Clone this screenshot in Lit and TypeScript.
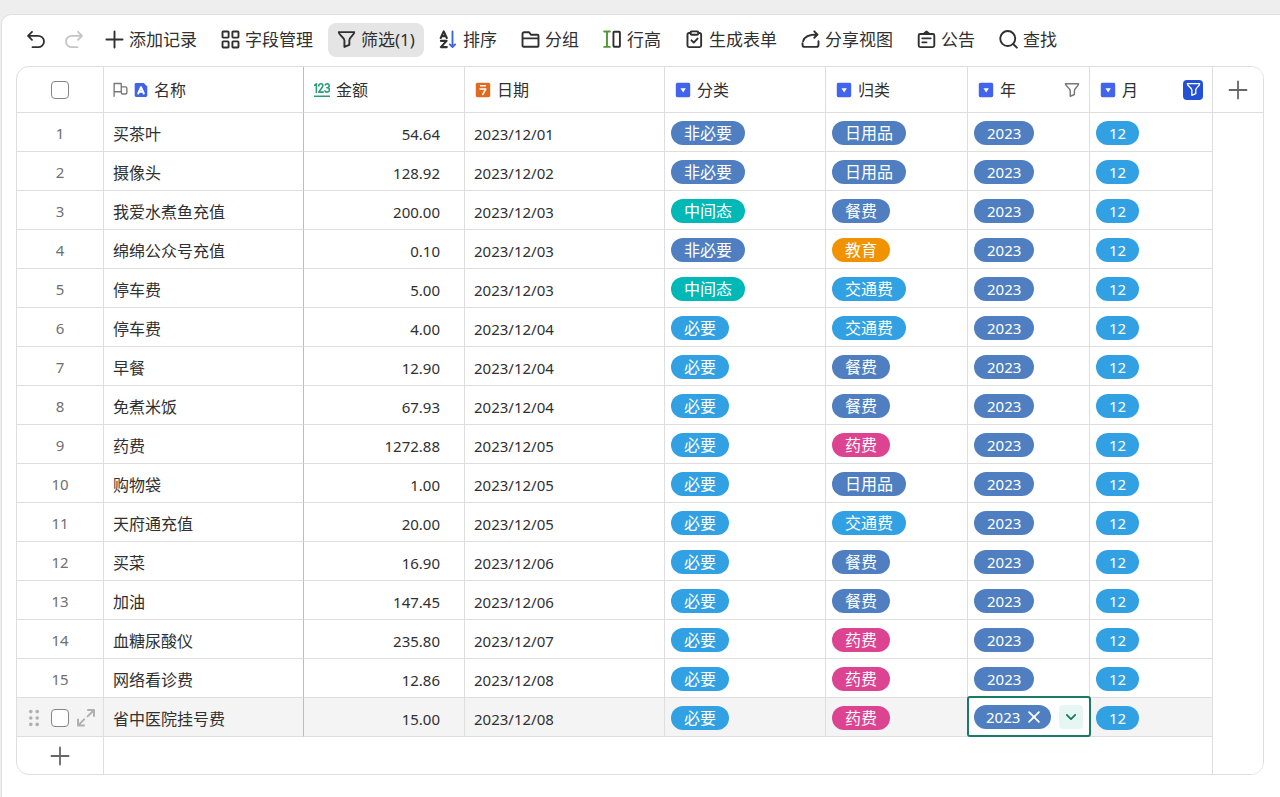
import { LitElement, html, css, svg, nothing } from "lit";
import type { TemplateResult, SVGTemplateResult } from "lit";
import { customElement, property } from "lit/decorators.js";
import { classMap } from "lit/directives/class-map.js";

const glyphs: Record<string, SVGTemplateResult> = {
  undo: svg`<path d="M6 1.800 2 5.800l4 4M2.400 5.800H12a6 5.700 0 0 1 0 11.400H6.500"/>`,
  redo: svg`<path d="M14 1.800l4 4-4 4M17.600 5.800H8a6 5.700 0 0 0 0 11.400h5.500"/>`,
  plus: svg`<path d="M10 1.500v17M1.500 10h17"/>`,
  grid: svg`<rect x="1.600" y="1.600" width="6.400" height="6.400" rx=".8"/><rect x="12" y="1.600" width="6.400" height="6.400" rx=".8"/><rect x="1.600" y="12" width="6.400" height="6.400" rx=".8"/><rect x="12" y="12" width="6.400" height="6.400" rx=".8"/>`,
  filter: svg`<path d="M1.800 2.200h16.400c0 3.400-5.200 5.200-5.200 8.600v4.800L7.800 17.800v-7C7.800 7.400 1.800 5.600 1.800 2.200z"/>`,
  sort: svg`<g stroke-width="2.200"><path d="M1.800 8.400 5 1.400l3.200 7M3 6.400h4M2 11.400h6L2 18h6.200"/></g><path stroke="#4163e6" d="M14.200 1.400v16M11.400 15.200l2.800 2.700 2.800-2.700"/>`,
  folder: svg`<path d="M2.600 17.600h14.800a1 1 0 0 0 1-1V6a1 1 0 0 0-1-1h-7L8.600 2.400H3.200a1.600 1.600 0 0 0-1.600 1.600V16.600a1 1 0 0 0 1 1zM1.800 8.800h16.400"/>`,
  rowHeight: svg`<path stroke="#4f9a35" d="M1.200 1.600h6M1.200 17.800h6M4.200 1.600v16.200"/><rect x="11" y="1.800" width="6.800" height="15.800" rx=".8"/>`,
  form: svg`<path d="M6 3.200H4.200a1.600 1.600 0 0 0-1.600 1.600v11.600A1.600 1.600 0 0 0 4.200 18h11.200a1.600 1.600 0 0 0 1.600-1.600V4.800a1.600 1.600 0 0 0-1.600-1.600H14"/><rect x="5.800" y="1.400" width="8.200" height="3.600" rx="1.200"/><path d="M6.800 10.900 9.200 13.200l4-4.200"/>`,
  share: svg`<path d="M14 1.400 17.400 4.800 14 8.200M17 4.800C10 4.800 3.600 7 2.200 11.800M1.600 13.800v1.600A2.400 2.400 0 0 0 4 17.800h12a2.400 2.400 0 0 0 2.400-2.400v-3.600"/>`,
  notice: svg`<rect x="1.800" y="4.200" width="16.400" height="13.800" rx="1.600"/><path d="M6.800 4.200 10 1.600l3.200 2.600M5.600 8.800h8.800M5.600 13h4.400"/>`,
  search: svg`<circle cx="9.200" cy="9" r="7.900"/><path d="M14.900 14.700 18.800 18.600"/>`,
  expand: svg`<path d="M12 2h6v6M17.800 2.200 11.600 8.400M2 11.600v6h6M2.200 17.400l6-6"/>`,
  dots: svg`<g fill="currentColor" stroke="none"><circle cx="6.800" cy="3.600" r="1.800"/><circle cx="13.200" cy="3.600" r="1.800"/><circle cx="6.800" cy="10" r="1.800"/><circle cx="13.200" cy="10" r="1.800"/><circle cx="6.800" cy="16.400" r="1.800"/><circle cx="13.200" cy="16.400" r="1.800"/></g>`,
  close: svg`<path d="M3 3 17 17M17 3 3 17"/>`,
  chevron: svg`<path d="M3 6.500l7 7 7-7"/>`,
  flag: svg`<path d="M1.500 19V2h9.500v11H1.500M11 6.500h5.500a2 2 0 0 1 2 2V14a2 2 0 0 1-2 2H13a2 2 0 0 1-2-2v-1"/>`,
  textField: svg`<path fill="#4163e6" stroke="none" d="M3 0h11l5 5v13a2 2 0 0 1-2 2H3a2 2 0 0 1-2-2V2a2 2 0 0 1 2-2z"/><path stroke="#fff" stroke-width="2.800" d="M6 15 10 6l4 9M7.500 12.400h5"/>`,
  numberField: svg`<g stroke="#2a9c78"><path d="M.8 4.200 3 2.200V13M6 4.800c.4-3.400 5-3.400 5 0 0 2.200-3.200 4.600-5 7.800h5.600M14 3.800c1.200-2.400 5-1.800 5 .8 0 1.600-1.400 2.500-3 2.500 1.800 0 3.300.9 3.300 2.800 0 3-4.400 3.700-5.600 1.200M.5 17.800h19"/></g>`,
  dateField: svg`<rect x="1" y="1" width="18" height="18" rx="2" fill="#e06a20" stroke="none"/><path stroke="#fff" d="M7 4.700h6M6.400 8.800h7L9.800 15.600"/>`,
  selectField: svg`<rect x="1" y="1" width="18" height="18" rx="2" fill="#4163ee" stroke="none"/><path fill="#fff" stroke="none" d="M6.800 7.800h6.800L10.200 13.200z"/>`,
};

@customElement("ui-icon")
export class UiIcon extends LitElement {
  @property() name = "plus";
  @property({ type: Number }) size = 20;
  @property({ type: Number }) weight = 1.8;

  static styles = css`
    :host { display: inline-flex; flex: none; }
    .glyph { display: block; fill: none; stroke: currentColor; stroke-linecap: round; stroke-linejoin: round; }
  `;

  render() {
    return html`<svg class="glyph" viewBox="0 0 20 20" width=${this.size} height=${this.size} stroke-width=${this.weight} aria-hidden="true">${glyphs[this.name]}</svg>`;
  }
}

const tones: Record<string, string> = {
  非必要: "blue", 中间态: "teal", 必要: "sky",
  日用品: "blue", 餐费: "blue", 教育: "orange", 交通费: "sky", 药费: "pink",
};

interface Entry { name: string; amount: string; date: string; need: string; kind: string; }

const entries: Entry[] = ([
  ["买茶叶", "54.64", "01", "非必要", "日用品"],
  ["摄像头", "128.92", "02", "非必要", "日用品"],
  ["我爱水煮鱼充值", "200.00", "03", "中间态", "餐费"],
  ["绵绵公众号充值", "0.10", "03", "非必要", "教育"],
  ["停车费", "5.00", "03", "中间态", "交通费"],
  ["停车费", "4.00", "04", "必要", "交通费"],
  ["早餐", "12.90", "04", "必要", "餐费"],
  ["免煮米饭", "67.93", "04", "必要", "餐费"],
  ["药费", "1272.88", "05", "必要", "药费"],
  ["购物袋", "1.00", "05", "必要", "日用品"],
  ["天府通充值", "20.00", "05", "必要", "交通费"],
  ["买菜", "16.90", "06", "必要", "餐费"],
  ["加油", "147.45", "06", "必要", "餐费"],
  ["血糖尿酸仪", "235.80", "07", "必要", "药费"],
  ["网络看诊费", "12.86", "08", "必要", "药费"],
  ["省中医院挂号费", "15.00", "08", "必要", "药费"],
] as const).map(([name, amount, day, need, kind]) => ({ name, amount, date: `2023/12/${day}`, need, kind }));

const tools: [string, string][] = [
  ["plus", "添加记录"], ["grid", "字段管理"], ["filter", "筛选(1)"], ["sort", "排序"],
  ["folder", "分组"], ["rowHeight", "行高"], ["form", "生成表单"], ["share", "分享视图"],
  ["notice", "公告"], ["search", "查找"],
];

@customElement("app-root")
export class AppRoot extends LitElement {
  static styles = css`
    :host {
      display: block;
      box-sizing: border-box;
      min-height: 100vh;
      padding: 14px 0 0 1px;
      background: #eeeeee;
      color: #303030;
      font: 16px/24px "Noto Sans", "Noto Sans CJK SC", sans-serif;
    }
    .sheet {
      box-sizing: border-box;
      min-height: calc(100vh - 14px);
      padding: 0 16px 22px 14px;
      background: #fff;
      border: solid #e0e0e0;
      border-width: 1px 0 0 1px;
      border-radius: 10px 0 0 0;
    }
    button {
      display: inline-flex;
      align-items: center;
      justify-content: center;
      margin: 0;
      padding: 0;
      border: 0;
      background: none;
      color: inherit;
      font: inherit;
      cursor: pointer;
    }
    .toolbar { box-sizing: border-box; display: flex; align-items: center; gap: 6px; height: 51px; padding: 0 0 2px 4px; }
    .tool { flex: none; height: 34px; gap: 5px; padding: 0 9px; border-radius: 8px; font-size: 17px; white-space: nowrap; }
    .tool.square { width: 32px; padding: 0; }
    .tool.on { background: #e5e5e5; }
    .tool:disabled { color: #c4c4c4; cursor: default; }

    .frame { border: 1px solid #dedede; border-radius: 13px; overflow: hidden; }
    .records { width: 100%; table-layout: fixed; border-collapse: separate; border-spacing: 0; }
    .c-index { width: 87px; }
    .c-name, .c-date { width: 200px; }
    .c-amount, .c-need { width: 161px; }
    .c-kind { width: 142px; }
    .c-year { width: 122px; }
    .c-month { width: 123px; }

    th, td {
      box-sizing: border-box;
      height: 39px;
      padding: 1px 9px 0;
      border: solid #dedede;
      border-width: 0 1px 1px 0;
      text-align: left;
      font-weight: 400;
      white-space: nowrap;
    }
    th { height: 46px; padding: 0 9px 0 10px; }
    .name { border-right-color: #bcbcbc; }
    th.name { padding-left: 9px; }
    td.name { padding-top: 3px; }
    .head { display: flex; align-items: center; gap: 6px; }
    .head .spread { margin-left: auto; color: #777; }
    .head .spread.on { width: 20px; height: 20px; border-radius: 4px; background: #2450d6; color: #fff; }
    .flag { color: #777; }
    th.index, td.index { padding: 0; text-align: center; color: #707070; font-size: 15px; }
    td.index { padding-top: 1px; }
    .value { font-size: 15px; padding-top: 3px; }
    .amount { padding-right: 24px; text-align: right; }
    .tags { padding-left: 6px; padding-right: 6px; }
    th.spare, td.spare, .current td.spare { border-width: 0; padding: 0; background: #fff; color: #666; }
    th.spare { border-bottom-width: 1px; }

    .pill {
      display: inline-flex;
      align-items: center;
      gap: 7px;
      height: 24px;
      padding: 0 13px;
      border-radius: 12px;
      color: #fff;
      vertical-align: middle;
    }
    .pill.num { font-size: 15px; }
    .pill.open { padding: 0 10px 0 12px; }
    .blue { background: #4f7fc1; }
    .sky { background: #31a1e3; }
    .teal { background: #00b9b7; }
    .orange { background: #f19300; }
    .pink { background: #dc4492; }

    .check {
      appearance: none;
      box-sizing: border-box;
      display: block;
      flex: none;
      width: 18px;
      height: 18px;
      margin: 0;
      border: 1px solid #858585;
      border-radius: 4px;
      background: #fff;
    }
    .handles { display: flex; align-items: center; justify-content: center; gap: 7px; color: #b0b0b0; }
    .current td { background: #f4f4f4; }
    .current .editing { position: relative; padding-top: 0; background: #fff; }
    .editing::after {
      content: "";
      position: absolute;
      inset: -2px -2px -1px -1px;
      border: 2px solid #1b7a65;
      border-radius: 3px;
      pointer-events: none;
    }
    .editor { display: flex; align-items: center; justify-content: space-between; }
    .drop { width: 24px; height: 24px; border-radius: 4px; background: #e6f6f3; color: #10795f; }
    .foot td { height: 37px; border-bottom-width: 0; padding: 0; color: #666; }
    .add, .add-field { display: flex; width: 100%; height: 36px; }
  `;

  private pill(text: string, tone: string, num = false): TemplateResult {
    return html`<span class="pill ${tone} ${num ? "num" : ""}">${text}</span>`;
  }

  private head(icon: string, label: string, extra: unknown = nothing): TemplateResult {
    return html`<div class="head"><ui-icon name=${icon} size="16" weight="2"></ui-icon><span>${label}</span>${extra}</div>`;
  }

  private row(entry: Entry, i: number): TemplateResult {
    const current = i === entries.length - 1;
    return html`<tr class=${classMap({ current })}>
      <td class="index">${current
        ? html`<div class="handles">
            <ui-icon name="dots"></ui-icon>
            <input class="check" type="checkbox" aria-label="选择 ${entry.name}">
            <button aria-label="展开记录"><ui-icon name="expand" weight="2"></ui-icon></button>
          </div>`
        : i + 1}</td>
      <td class="name">${entry.name}</td>
      <td class="value amount">${entry.amount}</td>
      <td class="value">${entry.date}</td>
      <td class="tags">${this.pill(entry.need, tones[entry.need])}</td>
      <td class="tags">${this.pill(entry.kind, tones[entry.kind])}</td>
      ${current
        ? html`<td class="tags editing"><div class="editor">
            <span class="pill num open blue">2023<button aria-label="移除"><ui-icon name="close" size="14" weight="2.600"></ui-icon></button></span>
            <button class="drop" aria-label="选项"><ui-icon name="chevron" size="12" weight="3"></ui-icon></button>
          </div></td>`
        : html`<td class="tags">${this.pill("2023", "blue", true)}</td>`}
      <td class="tags">${this.pill("12", "sky", true)}</td>
      <td class="spare"></td>
    </tr>`;
  }

  render() {
    return html`<main class="sheet">
      <div class="toolbar" role="toolbar">
        <button class="tool square" aria-label="撤销"><ui-icon name="undo"></ui-icon></button>
        <button class="tool square" aria-label="重做" disabled><ui-icon name="redo"></ui-icon></button>
        ${tools.map(([icon, label]) => html`<button class="tool ${classMap({ on: icon === "filter" })}"><ui-icon name=${icon} size="19" weight="2"></ui-icon><span>${label}</span></button>`)}
      </div>
      <div class="frame">
        <table class="records">
          <colgroup>
            <col class="c-index"><col class="c-name"><col class="c-amount"><col class="c-date"><col class="c-need"><col class="c-kind"><col class="c-year"><col class="c-month"><col>
          </colgroup>
          <thead><tr>
            <th class="index"><div class="handles"><input class="check" type="checkbox" aria-label="全选"></div></th>
            <th class="name"><div class="head"><ui-icon class="flag" name="flag" size="15"></ui-icon><ui-icon name="textField" size="14"></ui-icon><span>名称</span></div></th>
            <th>${this.head("numberField", "金额")}</th>
            <th>${this.head("dateField", "日期")}</th>
            <th>${this.head("selectField", "分类")}</th>
            <th>${this.head("selectField", "归类")}</th>
            <th>${this.head("selectField", "年", html`<button class="spread" aria-label="筛选 年"><ui-icon name="filter" size="16"></ui-icon></button>`)}</th>
            <th>${this.head("selectField", "月", html`<button class="spread on" aria-label="筛选 月"><ui-icon name="filter" size="15"></ui-icon></button>`)}</th>
            <th class="spare"><button class="add-field" aria-label="添加字段"><ui-icon name="plus"></ui-icon></button></th>
          </tr></thead>
          <tbody>
            ${entries.map((entry, i) => this.row(entry, i))}
            <tr class="foot">
              <td class="index"><button class="add" aria-label="添加记录"><ui-icon name="plus"></ui-icon></button></td>
              <td colspan="7"></td>
              <td class="spare"></td>
            </tr>
          </tbody>
        </table>
      </div>
    </main>`;
  }
}
